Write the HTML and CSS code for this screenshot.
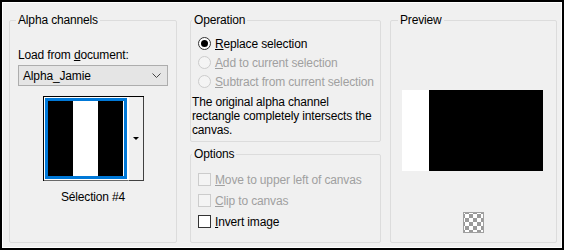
FILE: index.html
```html
<!DOCTYPE html>
<html lang="en">
<head>
    <meta charset="UTF-8">
    <title>Alpha channels</title>
    <link rel="stylesheet" href="styles.css">
</head>
<body>
    <div class="window">
        <div class="dialog">
            <fieldset class="group group-alpha">
                <legend>Alpha channels</legend>
                <div class="field-label">Load from <u>d</u>ocument:</div>
                <div class="select">
                    <span>Alpha_Jamie</span>
                    <svg class="chevron" width="9" height="5" viewBox="0 0 9 5">
                        <path d="M0.5 0.5 L4.5 4.5 L8.5 0.5" fill="none" stroke="#444" stroke-width="1"/>
                    </svg>
                </div>
                <div class="swatch">
                    <div class="thumb">
                        <div class="thumb-img">
                            <span class="stripe black"></span>
                            <span class="stripe white"></span>
                            <span class="stripe black"></span>
                        </div>
                    </div>
                    <div class="swatch-btn">
                        <span class="tri"></span>
                    </div>
                </div>
                <div class="caption">Sélection #4</div>
            </fieldset>

            <div class="column">
                <fieldset class="group group-op">
                    <legend>Operation</legend>
                    <div class="opt">
                        <span class="radio checked"></span>
                        <span><u>R</u>eplace selection</span>
                    </div>
                    <div class="opt disabled">
                        <span class="radio"></span>
                        <span><u>A</u>dd to current selection</span>
                    </div>
                    <div class="opt disabled">
                        <span class="radio"></span>
                        <span><u>S</u>ubtract from current selection</span>
                    </div>
                    <p class="note">The original alpha channel rectangle completely intersects the canvas.</p>
                </fieldset>

                <fieldset class="group group-options">
                    <legend>Options</legend>
                    <div class="opt check-row disabled">
                        <span class="check"></span>
                        <span><u>M</u>ove to upper left of canvas</span>
                    </div>
                    <div class="opt check-row disabled">
                        <span class="check"></span>
                        <span><u>C</u>lip to canvas</span>
                    </div>
                    <div class="opt check-row">
                        <span class="check"></span>
                        <span><u>I</u>nvert image</span>
                    </div>
                </fieldset>
            </div>

            <fieldset class="group group-preview">
                <legend>Preview</legend>
                <div class="preview">
                    <span class="pv-white"></span>
                    <span class="pv-black"></span>
                </div>
                <div class="checker"></div>
            </fieldset>
        </div>
    </div>
</body>
</html>
```

FILE: styles.css
```css
body {
    margin: 0;
    font-family: 'Liberation Sans', Arial, sans-serif;
    font-size: 12px;
    letter-spacing: -0.15px;
    color: #000;
}

.window {
    width: 564px;
    height: 250px;
    box-sizing: border-box;
    border: 2px solid #000;
}

.dialog {
    height: 100%;
    box-sizing: border-box;
    border: 1px solid #fff;
    background: #f0f0f0;
    padding: 10px 0 4px 6px;
    display: flex;
    align-items: stretch;
}

.group {
    margin: 0;
    min-width: 0;
    box-sizing: border-box;
    border: 1px solid #dcdcdc;
    border-radius: 2px;
    padding: 0;
}

.group legend {
    padding: 0 2px;
    line-height: 15px;
}

/* Alpha channels */
.group-alpha {
    width: 168px;
    margin-right: 13px;
    padding: 20px 8px 0 8px;
}

.group-alpha legend {
    margin-left: -2px;
}

.field-label {
    line-height: 15px;
}

.select {
    margin-top: 2px;
    height: 21px;
    box-sizing: border-box;
    border: 1px solid #adadad;
    background: #e5e5e5;
    display: flex;
    align-items: center;
    justify-content: space-between;
    padding: 0 6px 0 4px;
}

.chevron {
    display: block;
}

.swatch {
    margin: 10px auto 0;
    width: 101px;
    height: 85px;
    box-sizing: border-box;
    display: flex;
    border-top: 1px solid #000;
    border-left: 1px solid #000;
}

.thumb {
    width: 84px;
    background: #fff;
    padding: 1px;
    box-sizing: border-box;
    border-bottom: 1px solid #696969;
}

.thumb-img {
    height: 100%;
    box-sizing: border-box;
    border: 3px solid #0078d7;
    display: flex;
}

.stripe {
    flex: 1;
}

.stripe.black {
    background: #000;
}

.stripe.white {
    background: #fff;
}

.swatch-btn {
    flex: 1;
    background: #f0f0f0;
    border-left: 1px solid #fff;
    border-right: 1px solid #404040;
    border-bottom: 1px solid #404040;
    display: flex;
    align-items: center;
    justify-content: center;
}

.tri {
    width: 0;
    height: 0;
    border-left: 3px solid transparent;
    border-right: 3px solid transparent;
    border-top: 3px solid #000;
}

.caption {
    margin-top: 9px;
    line-height: 15px;
    text-align: center;
}

/* Middle column */
.column {
    width: 191px;
    margin-right: 9px;
    display: flex;
    flex-direction: column;
    gap: 5px;
}

.group-op {
    height: 129px;
    padding: 6px 0 0 1px;
}

.group-op legend,
.group-options legend {
    margin-left: 0;
}

.opt {
    height: 19px;
    display: flex;
    align-items: center;
    padding-left: 6px;
}

.opt.disabled {
    color: #a0a0a0;
}

.radio {
    width: 13px;
    height: 13px;
    box-sizing: border-box;
    border: 1px solid #333;
    border-radius: 50%;
    background: #fff;
    margin-right: 4px;
    position: relative;
}

.radio.checked::after {
    content: "";
    position: absolute;
    left: 2px;
    top: 2px;
    width: 7px;
    height: 7px;
    border-radius: 50%;
    background: #000;
}

.opt.disabled .radio {
    border-color: #cccccc;
    background: #f4f4f4;
}

.note {
    margin: 4px 0 0;
    line-height: 14px;
    padding-right: 2px;
}

.group-options {
    flex: 1;
    padding: 7px 0 0 1px;
}

.check-row {
    height: 21px;
}

.check {
    width: 13px;
    height: 13px;
    box-sizing: border-box;
    border: 1px solid #333;
    background: #fff;
    margin-right: 4px;
}

.opt.disabled .check {
    border-color: #cccccc;
    background: #f4f4f4;
}

/* Preview */
.group-preview {
    width: 167px;
    padding: 0 11px;
}

.group-preview legend {
    margin-left: -4px;
}

.preview {
    margin-top: 62px;
    width: 141px;
    height: 81px;
    display: flex;
}

.pv-white {
    width: 27px;
    background: #fff;
}

.pv-black {
    flex: 1;
    background: #000;
}

.checker {
    margin: 41px auto 0;
    width: 21px;
    height: 21px;
    box-sizing: border-box;
    border: 1px solid #a0a0a0;
    background-color: #fff;
    background-image:
        linear-gradient(45deg, #9a9a9a 25%, transparent 25%, transparent 75%, #9a9a9a 75%),
        linear-gradient(45deg, #9a9a9a 25%, transparent 25%, transparent 75%, #9a9a9a 75%);
    background-size: 8px 8px;
    background-position: 1px 1px, 5px 5px;
}
```
